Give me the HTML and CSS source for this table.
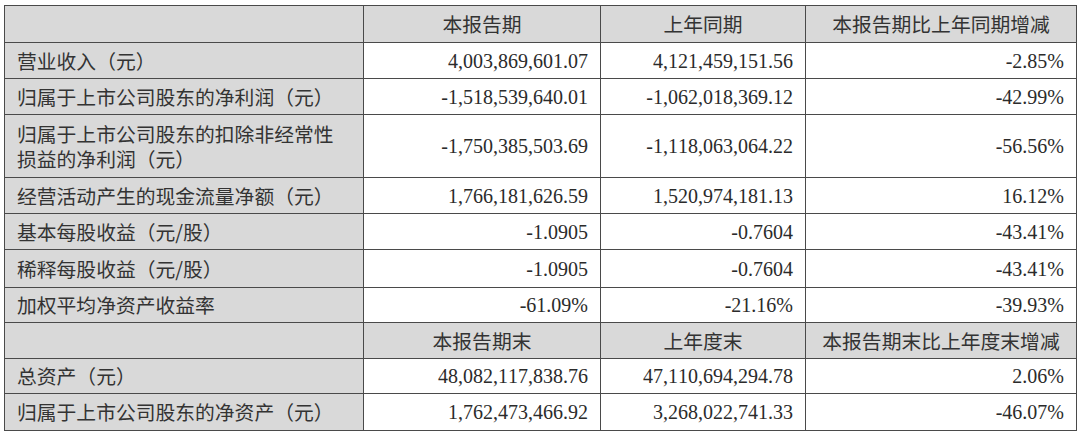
FILE: index.html
```html
<!DOCTYPE html>
<html lang="zh-CN">
<head>
<meta charset="utf-8">
<title>主要会计数据</title>
<link rel="stylesheet" href="styles.css">
</head>
<body>
<table class="data">
  <colgroup>
    <col class="c1"><col class="c2"><col class="c3"><col class="c4">
  </colgroup>
  <tr class="head h37">
    <th class="label"></th><th>本报告期</th><th>上年同期</th><th>本报告期比上年同期增减</th>
  </tr>
  <tr class="h36">
    <td class="label">营业收入（元）</td><td>4,003,869,601.07</td><td>4,121,459,151.56</td><td>-2.85%</td>
  </tr>
  <tr class="h36">
    <td class="label">归属于上市公司股东的净利润（元）</td><td>-1,518,539,640.01</td><td>-1,062,018,369.12</td><td>-42.99%</td>
  </tr>
  <tr class="h63">
    <td class="label two"><span class="ln">归属于上市公司股东的扣除非经常性</span><span class="ln">损益的净利润（元）</span></td><td>-1,750,385,503.69</td><td>-1,118,063,064.22</td><td>-56.56%</td>
  </tr>
  <tr class="h36">
    <td class="label">经营活动产生的现金流量净额（元）</td><td>1,766,181,626.59</td><td>1,520,974,181.13</td><td>16.12%</td>
  </tr>
  <tr class="h36">
    <td class="label">基本每股收益（元/股）</td><td>-1.0905</td><td>-0.7604</td><td>-43.41%</td>
  </tr>
  <tr class="h38">
    <td class="label">稀释每股收益（元/股）</td><td>-1.0905</td><td>-0.7604</td><td>-43.41%</td>
  </tr>
  <tr class="h35">
    <td class="label">加权平均净资产收益率</td><td>-61.09%</td><td>-21.16%</td><td>-39.93%</td>
  </tr>
  <tr class="head h36">
    <th class="label"></th><th>本报告期末</th><th>上年度末</th><th>本报告期末比上年度末增减</th>
  </tr>
  <tr class="h35">
    <td class="label">总资产（元）</td><td>48,082,117,838.76</td><td>47,110,694,294.78</td><td>2.06%</td>
  </tr>
  <tr class="h37">
    <td class="label">归属于上市公司股东的净资产（元）</td><td>1,762,473,466.92</td><td>3,268,022,741.33</td><td>-46.07%</td>
  </tr>
</table>
</body>
</html>
```

FILE: styles.css
```css
html, body {
  margin: 0;
  padding: 0;
  background: #ffffff;
}
body {
  padding: 5px 0 0 4px;
}
.data {
  border-collapse: collapse;
  table-layout: fixed;
  width: 1072px;
  font-family: "Liberation Serif", "Noto Sans CJK SC", serif;
  color: #2b2b2b;
  text-spacing-trim: space-all;
  font-kerning: none;
}
.c1 { width: 359px; }
.c2 { width: 237px; }
.c3 { width: 205px; }
.c4 { width: 271px; }
.data th, .data td {
  border: 1px solid #4a4a4a;
  padding: 0 12px 0 12px;
  font-size: 20px;
  font-weight: normal;
  text-align: right;
  vertical-align: middle;
  white-space: nowrap;
  line-height: 24px;
}
.data th {
  text-align: center;
  background: #d9d9d9;
  font-family: "Noto Sans CJK SC", sans-serif;
  font-size: 19.8px;
  color: #333;
  padding: 0 6px;
}
.data td.label {
  text-align: left;
  background: #d9d9d9;
  font-family: "Noto Sans CJK SC", sans-serif;
  font-size: 19.8px;
  color: #333;
  padding-left: 12px;
}
.data td.two .ln {
  display: block;
  height: 25px;
  line-height: 25px;
  overflow: visible;
}
.h35 { height: 35px; }
.h36 { height: 36px; }
.h37 { height: 37px; }
.h38 { height: 38px; }
.h63 { height: 63px; }
```
